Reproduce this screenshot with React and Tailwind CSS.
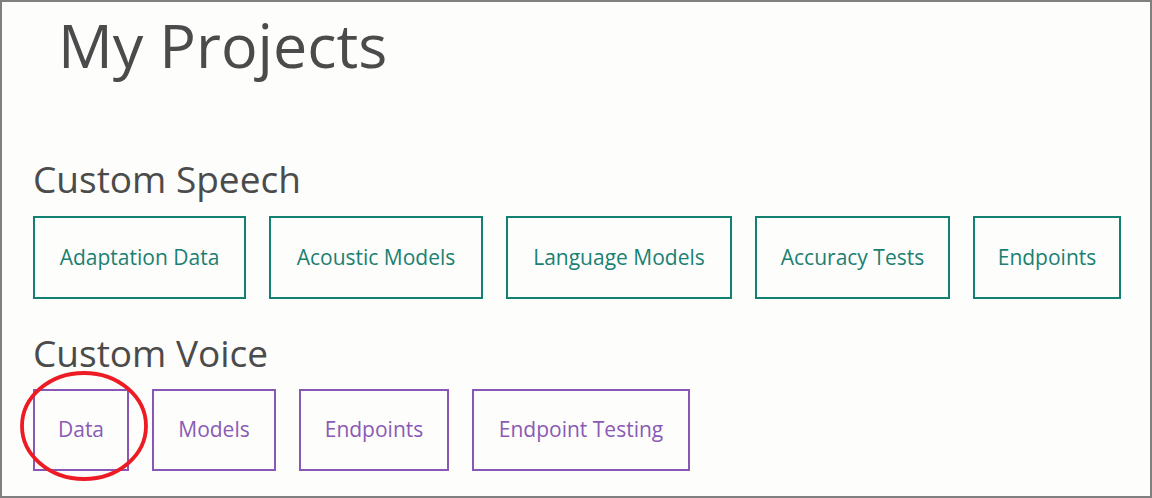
import React from "react";

const speech = [
  ["Adaptation Data", "w-[213px]"],
  ["Acoustic Models", "w-[214px]"],
  ["Language Models", "w-[226px]"],
  ["Accuracy Tests", "w-[195px]"],
  ["Endpoints", "w-[148px]"],
];
const voice = [
  ["Data", "w-[96px]"],
  ["Models", "w-[124px]"],
  ["Endpoints", "w-[150px]"],
  ["Endpoint Testing", "w-[218px]"],
];

export default function App() {
  return (
    <div
      className="relative w-[1152px] h-[498px] overflow-hidden border-2 border-[#808080] bg-[#fdfdfc] text-[#4b4b4b]"
      style={{ fontFamily: '"Open Sans", "Noto Sans", sans-serif' }}
    >
      <h1 className="mt-[11px] pl-[56px] text-[61px] leading-[64px] font-normal">My Projects</h1>

      <section className="pl-[31px]">
        <h2 className="mt-[83px] text-[37px] leading-[38px] font-normal">Custom Speech</h2>
        <div className="mt-[18px] flex gap-[23px]">
          {speech.map(([t, w]) => (
            <div
              key={t}
              className={`flex h-[83px] shrink-0 items-center justify-center whitespace-nowrap border-2 border-[#138172] text-[21px] text-[#1a8072] ${w}`}
            >
              {t}
            </div>
          ))}
        </div>

        <h2 className="mt-[35px] text-[37px] leading-[38px] font-normal">Custom Voice</h2>
        <div className="mt-[17px] flex gap-[23px]">
          {voice.map(([t, w]) => (
            <div
              key={t}
              className={`flex h-[82px] shrink-0 items-center justify-center whitespace-nowrap border-2 border-[#8957b5] text-[21px] text-[#8a5ab5] ${w}`}
            >
              {t}
            </div>
          ))}
        </div>
      </section>

      <svg className="pointer-events-none absolute left-0 top-0" width="1148" height="494">
        <ellipse cx="82" cy="424" rx="62" ry="53" fill="none" stroke="#ed1c24" strokeWidth="3.8" />
      </svg>
    </div>
  );
}
